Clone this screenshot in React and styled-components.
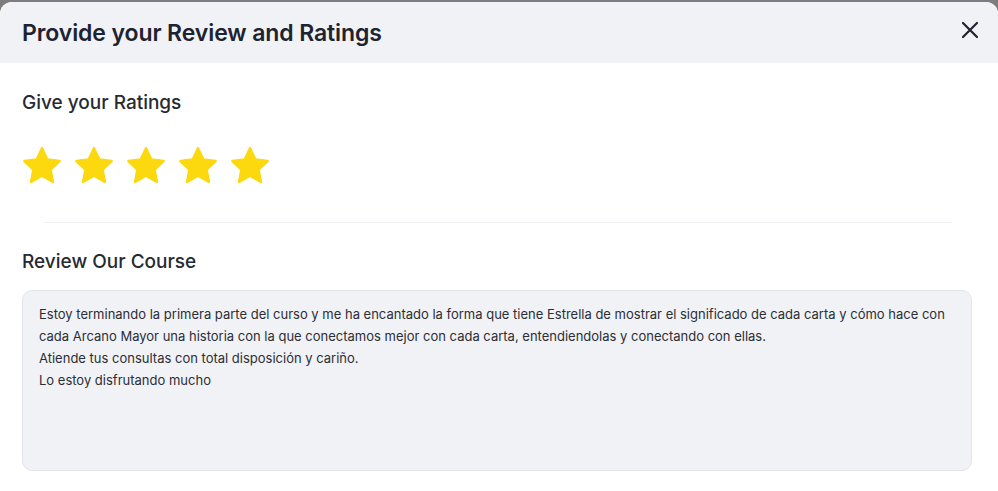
import React from "react"
import styled, { createGlobalStyle } from "styled-components"

const GlobalStyle = createGlobalStyle`
  html, body {
    margin: 0;
    padding: 0;
    background: #7d7d7d;
    font-family: "Inter", "Roboto", sans-serif;
  }
`

const Modal = styled.div`
  margin-top: 2px;
  width: 998px;
  height: 489px;
  background: #ffffff;
  border-radius: 12px 12px 0 0;
  overflow: hidden;
  display: flex;
  flex-direction: column;
`

const Header = styled.header`
  height: 61px;
  flex-shrink: 0;
  display: flex;
  align-items: center;
  justify-content: space-between;
  padding: 0 16px 0 22px;
  background: #f1f2f6;
`

const Title = styled.h2`
  margin: 0;
  font-size: 23px;
  font-weight: 600;
  color: #1d2330;
  letter-spacing: -0.1px;
`

const CloseButton = styled.button`
  border: 0;
  background: transparent;
  padding: 0;
  margin-bottom: 5px;
  width: 24px;
  height: 24px;
  display: flex;
  align-items: center;
  justify-content: center;
  cursor: pointer;
  color: #1f2430;
`

const Section = styled.div`
  padding: 0 22px;
  display: flex;
  flex-direction: column;
`

const Label = styled.h3`
  margin: ${(p) => p.$top || 0}px 0 0 0;
  font-size: 19px;
  font-weight: 500;
  color: #262a33;
  line-height: 24px;
`

const Stars = styled.div`
  display: flex;
  gap: 10px;
  margin-top: 30px;
  margin-left: -1px;
`

const Divider = styled.hr`
  margin: 35px 46px 0 44px;
  border: 0;
  border-top: 1px solid #eef0f3;
`

const ReviewBox = styled.div`
  margin-top: 16px;
  width: 950px;
  height: 181px;
  box-sizing: border-box;
  padding: 12px 16px;
  background: #f1f2f6;
  border: 1px solid #e3e5ea;
  border-radius: 10px;
  font-size: 13px;
  line-height: 22px;
  color: #2b2e35;
  white-space: pre-wrap;
`

function Star() {
  return (
    <svg width="42" height="42" viewBox="0 0 24 24">
      <path
        d="M12 1.8l3.05 6.45 7.05.9-5.2 4.9 1.35 7-6.25-3.45-6.25 3.45 1.35-7-5.2-4.9 7.05-.9z"
        fill="#fcd90f"
        stroke="#fcd90f"
        strokeWidth="1.4"
        strokeLinejoin="round"
      />
    </svg>
  )
}

const reviewText = `Estoy terminando la primera parte del curso y me ha encantado la forma que tiene Estrella de mostrar el significado de cada carta y cómo hace con cada Arcano Mayor una historia con la que conectamos mejor con cada carta, entendiendolas y conectando con ellas.
Atiende tus consultas con total disposición y cariño.
Lo estoy disfrutando mucho`

export default function App() {
  return (
    <>
      <GlobalStyle />
      <Modal>
        <Header>
          <Title>Provide your Review and Ratings</Title>
          <CloseButton aria-label="close">
            <svg width="20" height="20" viewBox="0 0 20 20">
              <path d="M3 3L17 17M17 3L3 17" stroke="currentColor" strokeWidth="2.2" strokeLinecap="round" />
            </svg>
          </CloseButton>
        </Header>
        <Section>
          <Label $top={28}>Give your Ratings</Label>
          <Stars>
            {[0, 1, 2, 3, 4].map((i) => (
              <Star key={i} />
            ))}
          </Stars>
        </Section>
        <Divider />
        <Section>
          <Label $top={27}>Review Our Course</Label>
          <ReviewBox>{reviewText}</ReviewBox>
        </Section>
      </Modal>
    </>
  )
}
